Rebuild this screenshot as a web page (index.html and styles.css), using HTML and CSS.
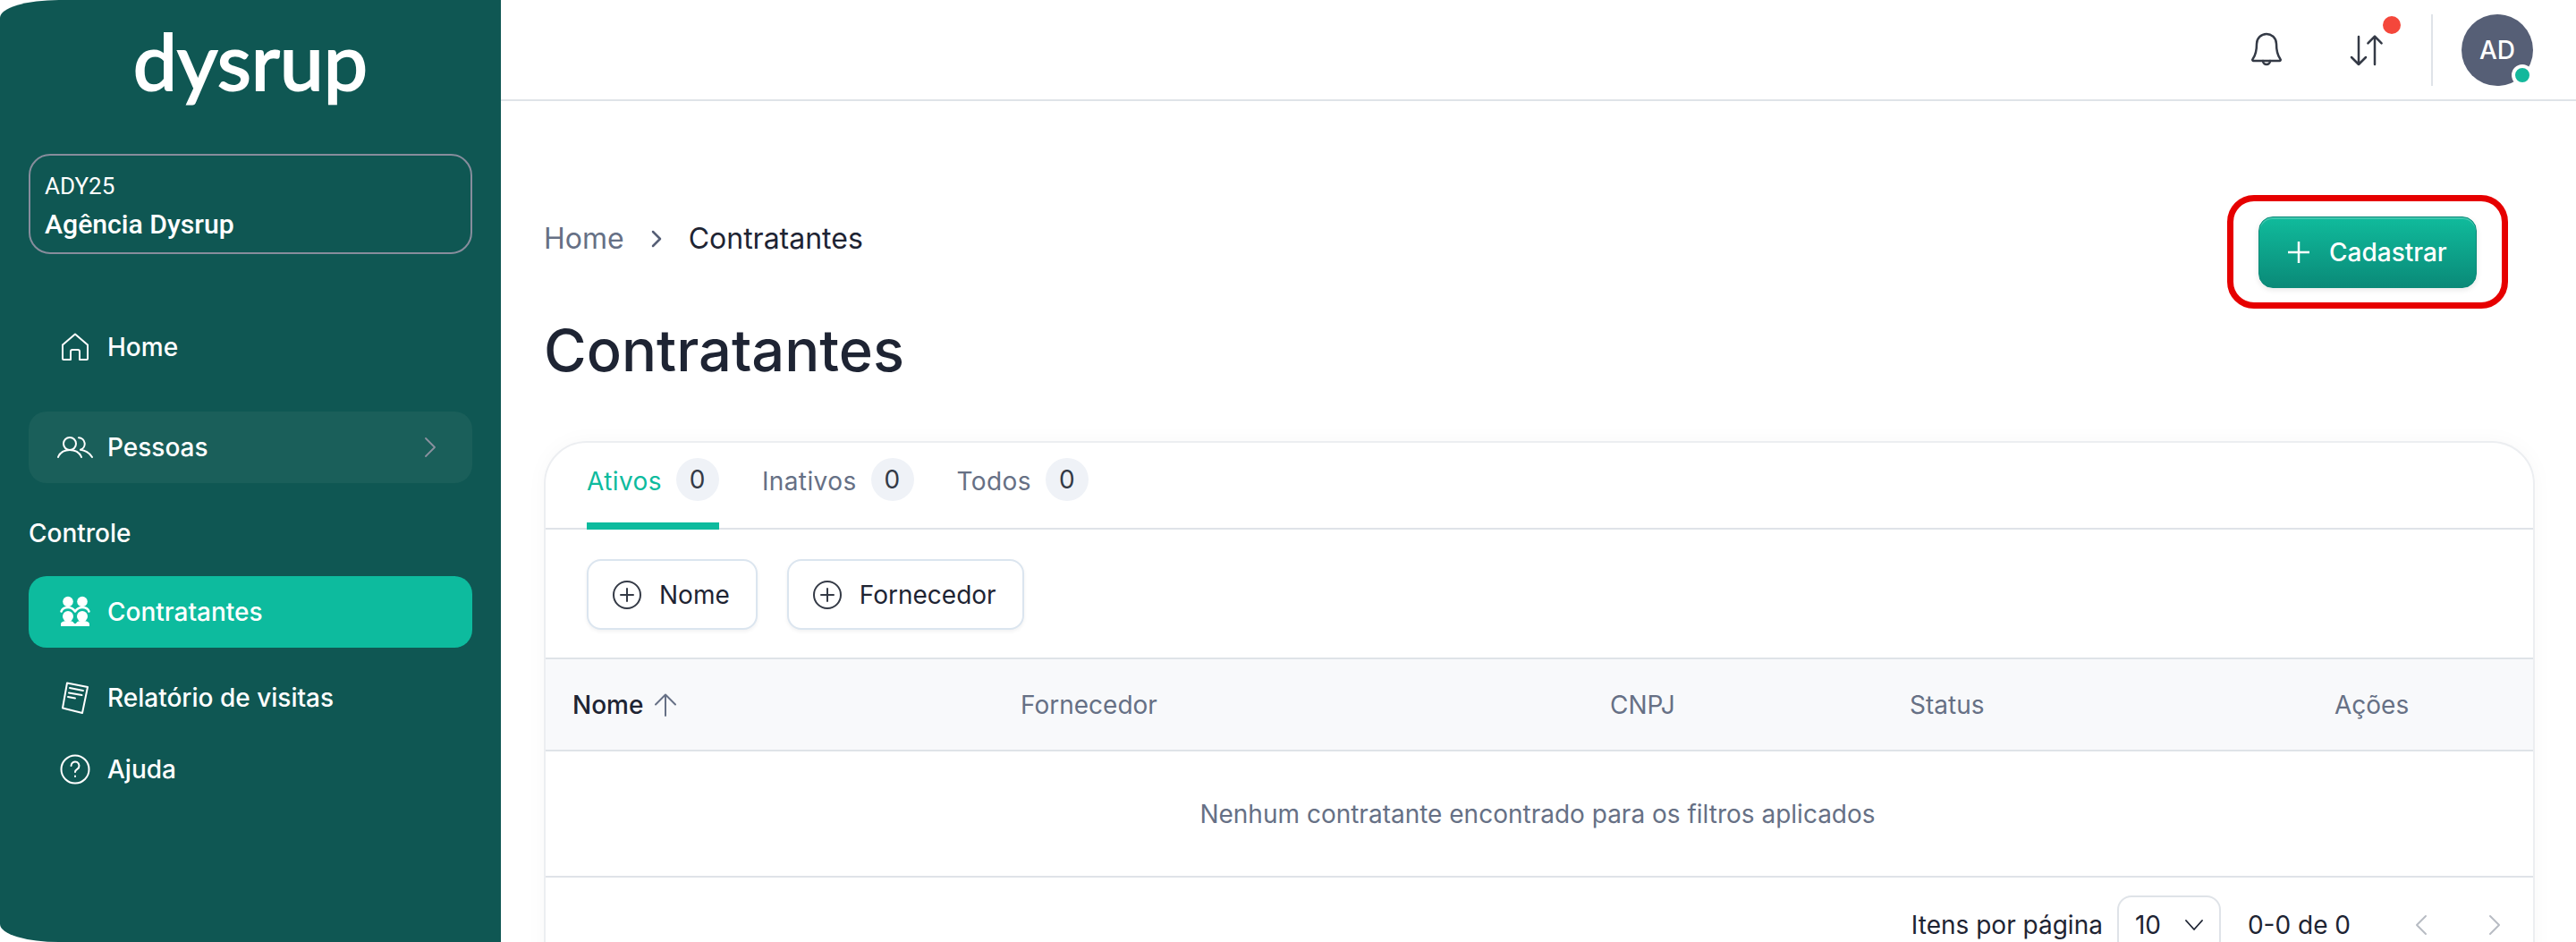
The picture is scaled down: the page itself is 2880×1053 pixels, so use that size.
FILE: index.html
```html
<!DOCTYPE html>
<html lang="pt-BR">
<head>
    <meta charset="UTF-8">
    <title>Contratantes - Dysrup</title>
    <link rel="stylesheet" href="styles.css">
</head>
<body>
    <aside class="sidebar">
        <div class="logo">dysrup</div>

        <div class="agency">
            <span class="agency-code">ADY25</span>
            <span class="agency-name">Agência Dysrup</span>
        </div>

        <nav class="nav">
            <a class="nav-item nav-home">
                <svg class="nav-icon" viewBox="0 0 36 36"><path d="M4 15.500 18 3.500l14 12V31a1 1 0 0 1-1 1h-8v-9a2 2 0 0 0-2-2h-6a2 2 0 0 0-2 2v9H5a1 1 0 0 1-1-1Z"/></svg>
                Home
            </a>
            <a class="nav-item nav-open">
                <svg class="nav-icon nav-icon-wide" viewBox="0 0 40 24"><circle cx="14" cy="8" r="7"/><path d="M1 23c2-5 7-8 13-8s11 3 13 8"/><path d="M24 1.200a7 7 0 0 1 2 13.600c6 .7 10 3.700 13 8.200"/></svg>
                Pessoas
                <svg class="nav-chevron" viewBox="0 0 12 22"><path d="m1 1 10 10L1 21"/></svg>
            </a>
            <div class="nav-title">Controle</div>
            <a class="nav-item nav-active">
                <svg class="nav-icon nav-icon-solid" viewBox="0 0 36 36"><circle cx="10" cy="6.500" r="5.800"/><circle cx="26" cy="6.500" r="5.800"/><path class="shoulders" d="M2.500 17.500c1-3 3.500-4.500 7.500-4.500s6 1.500 8 4.500c2-3 4-4.500 8-4.500s6.500 1.500 7.500 4.500"/><circle cx="10" cy="23" r="6"/><circle cx="26" cy="23" r="6"/><path d="M2 34v-2c0-3 3-4 8-4s6 1 7 3h2c1-2 2-3 7-3s8 1 8 4v2Z"/></svg>
                Contratantes
            </a>
            <a class="nav-item nav-report">
                <svg class="nav-icon" viewBox="0 0 36 36"><path d="M9 1.500 32 6l-6 29-22-5.500Z"/><path d="M12 7l15 3M11 12.500l14.500 2.500M10 17l8 1.500"/></svg>
                Relatório de visitas
            </a>
            <a class="nav-item nav-help">
                <svg class="nav-icon" viewBox="0 0 36 36"><circle cx="18" cy="18" r="15.500"/><path d="M13.500 14a4.500 4.500 0 1 1 7 3.700c-1.500 1-2.500 1.800-2.500 3.300"/><path d="M18 25.500v.5"/></svg>
                Ajuda
            </a>
        </nav>
    </aside>

    <div class="main">
        <header class="topbar">
            <svg class="top-icon" viewBox="0 0 24 24"><path d="M12 3a5.500 5.500 0 0 0-5.500 5.500c0 4-.7 6.500-2.200 8.500a.6.6 0 0 0 .5 1h14.400a.6.6 0 0 0 .5-1c-1.500-2-2.200-4.500-2.200-8.500A5.500 5.500 0 0 0 12 3Z"/><path d="M10 18a2 2 0 0 0 4 0"/></svg>
            <div class="transfer">
                <svg class="top-icon" viewBox="0 0 24 24"><path d="M7.500 4.500v15.500M3.500 16l4 4 4-4M16.500 20V4.500M12.700 8.200l3.800-3.900 3.800 3.900"/></svg>
                <span class="red-dot"></span>
            </div>
            <span class="top-divider"></span>
            <div class="avatar">AD<span class="online"></span></div>
        </header>

        <div class="page-head">
            <div>
                <div class="breadcrumb">
                    <span class="crumb-link">Home</span>
                    <svg class="crumb-sep" viewBox="0 0 12 20"><path d="m2 2 8 8-8 8"/></svg>
                    <span>Contratantes</span>
                </div>
                <h1>Contratantes</h1>
            </div>
            <div class="highlight">
                <button class="btn-primary">
                    <svg class="plus" viewBox="0 0 24 24"><path d="M12 0v24M0 12h24"/></svg>
                    Cadastrar
                </button>
            </div>
        </div>

        <section class="card">
            <div class="tabs">
                <div class="tab tab-active">Ativos <span class="count">0</span></div>
                <div class="tab">Inativos <span class="count">0</span></div>
                <div class="tab">Todos <span class="count">0</span></div>
            </div>

            <div class="filters">
                <button class="filter">
                    <svg class="filter-icon" viewBox="0 0 32 32"><circle cx="16" cy="16" r="15"/><path d="M16 9v14M9 16h14"/></svg>
                    Nome
                </button>
                <button class="filter">
                    <svg class="filter-icon" viewBox="0 0 32 32"><circle cx="16" cy="16" r="15"/><path d="M16 9v14M9 16h14"/></svg>
                    Fornecedor
                </button>
            </div>

            <div class="table-head">
                <div class="sorted">Nome <svg class="sort-icon" viewBox="0 0 26 26"><path d="M13 25V1.500M2 12.500l11-11 11 11"/></svg></div>
                <div>Fornecedor</div>
                <div>CNPJ</div>
                <div>Status</div>
                <div>Ações</div>
            </div>

            <div class="empty">Nenhum contratante encontrado para os filtros aplicados</div>

            <div class="table-foot">
                <span>Itens por página</span>
                <div class="page-size">
                    10
                    <svg class="select-chevron" viewBox="0 0 20 12"><path d="m1 1 9 10 9-10"/></svg>
                </div>
                <span class="range">0-0 de 0</span>
                <svg class="pager" viewBox="0 0 14 24"><path d="M12 2 2 12l10 10"/></svg>
                <svg class="pager" viewBox="0 0 14 24"><path d="m2 2 10 10L2 22"/></svg>
            </div>
        </section>
    </div>
</body>
</html>
```

FILE: styles.css
```css
* {
    box-sizing: border-box;
}
body {
    display: flex;
    height: 1053px;
    margin: 0;
    overflow: hidden;
    background: white;
    color: #1e2433;
    font-family: Inter, "Liberation Sans", sans-serif;
    font-size: 28px;
}
svg {
    flex: none;
    fill: none;
    stroke: currentColor;
    stroke-linecap: round;
    stroke-linejoin: round;
}

/* sidebar */
.sidebar {
    flex: none;
    width: 560px;
    height: 1053px;
    padding: 0 32px;
    background: #0f5753;
    border-radius: 66px 0 0 66px / 20px 0 0 20px;
    color: white;
}
.logo {
    height: 172px;
    padding-top: 17px;
    color: white;
    font-family: Lato, sans-serif;
    font-size: 88px;
    line-height: 100px;
    text-align: center;
    -webkit-text-stroke: 2px white;
}
.agency {
    display: flex;
    flex-direction: column;
    justify-content: center;
    height: 112px;
    padding-left: 16px;
    border: 2px solid #878d9c;
    border-radius: 24px;
    font-family: Roboto, sans-serif;
}
.agency-code {
    margin-top: 3px;
    font-size: 26px;
    line-height: 34px;
}
.agency-name {
    margin-top: 8px;
    font-size: 30.2px;
    font-weight: 500;
    line-height: 36px;
}
.nav-item {
    display: flex;
    align-items: center;
    height: 80px;
    padding-left: 34px;
    border-radius: 20px;
    font-weight: 500;
}
.nav-icon {
    width: 36px;
    height: 36px;
    margin-right: 18px;
    stroke-width: 2;
}
.nav-icon-wide {
    width: 40px;
    height: 24px;
    margin-left: -2px;
    margin-right: 16px;
}
.nav-icon-solid {
    fill: white;
    stroke: none;
}
.shoulders {
    fill: none;
    stroke: white;
    stroke-width: 2.5;
}
.nav-home {
    margin-top: 64px;
}
.nav-open {
    margin-top: 32px;
    background: #1a5f5a;
}
.nav-chevron {
    width: 12px;
    height: 22px;
    margin-left: auto;
    margin-right: 41px;
    color: #8b919f;
    stroke-width: 1.8;
}
.nav-title {
    margin-top: 36px;
    font-weight: 500;
    line-height: 40px;
}
.nav-active {
    margin-top: 28px;
    background: #0dbb9e;
}
.nav-report {
    margin-top: 16px;
}
.nav-help {
    margin-top: 0;
}

/* top bar */
.main {
    flex: 1;
    min-width: 0;
    padding: 0 46px 0 48px;
}
.topbar {
    display: flex;
    align-items: center;
    justify-content: flex-end;
    height: 113px;
    margin: 0 -46px 0 -48px;
    padding-right: 48px;
    border-bottom: 2px solid #dfe3e8;
}
.top-icon {
    display: block;
    width: 48px;
    height: 48px;
    color: #343a46;
    stroke-width: 1.25;
}
.transfer {
    position: relative;
    margin-left: 64px;
}
.red-dot {
    position: absolute;
    top: -14px;
    right: -14px;
    width: 20px;
    height: 20px;
    border-radius: 50%;
    background: #f4473b;
}
.top-divider {
    width: 2px;
    height: 80px;
    margin: 0 32px 0 48px;
    background: #dfe3e8;
}
.avatar {
    position: relative;
    display: flex;
    align-items: center;
    justify-content: center;
    width: 80px;
    height: 80px;
    border-radius: 50%;
    background: #565f76;
    color: white;
    font-weight: 500;
}
.online {
    position: absolute;
    right: 0;
    bottom: 0;
    width: 24px;
    height: 24px;
    border: 4px solid white;
    border-radius: 50%;
    background: #14b89c;
}

/* page heading */
.page-head {
    display: flex;
    justify-content: space-between;
    align-items: flex-start;
    margin-top: 105px;
    padding-right: 30px;
}
.breadcrumb {
    display: flex;
    align-items: center;
    margin-top: 29px;
    font-size: 32px;
    line-height: 40px;
}
.crumb-link {
    color: #667085;
}
.crumb-sep {
    width: 12px;
    height: 20px;
    margin: 0 30px;
    color: #565f76;
    stroke-width: 2.5;
}
h1 {
    margin: 67px 0 0;
    font-size: 65px;
    font-weight: 500;
    line-height: 76px;
}
.highlight {
    padding: 17px 28px 16px;
    border: 7px solid #e60000;
    border-radius: 30px;
}
.btn-primary {
    display: flex;
    align-items: center;
    gap: 22px;
    width: 244px;
    height: 80px;
    padding: 0 32px;
    border: 1px solid #0a8a78;
    border-radius: 16px;
    background: linear-gradient(#10bb9c, #0a8a78);
    box-shadow: inset 0 2px 0 rgba(255,255,255,0.2), 0 2px 6px rgba(0,0,0,0.1);
    color: white;
    font-family: inherit;
    font-size: 28px;
    font-weight: 500;
}
.plus {
    width: 24px;
    height: 24px;
    stroke-width: 2.5;
    stroke-linecap: butt;
}

/* table card */
.card {
    margin-top: 63px;
    border: 2px solid #eceef1;
    border-radius: 48px 48px 0 0;
    box-shadow: 0 0 24px rgba(0,0,0,0.03);
}
.tabs {
    display: flex;
    gap: 48px;
    height: 97px;
    padding: 17px 0 0 46px;
    border-bottom: 2px solid #dfe3e8;
}
.tab {
    display: flex;
    gap: 16px;
    align-items: flex-start;
    height: 78px;
    color: #667085;
    letter-spacing: 0.4px;
    line-height: 52px;
}
.tab-active {
    color: #0dbb9e;
    border-bottom: 8px solid #0dbb9e;
    border-radius: 8px 8px 0 0;
    height: 80px;
    margin-bottom: -2px;
}
.count {
    display: flex;
    align-items: center;
    justify-content: center;
    width: 48px;
    height: 48px;
    border-radius: 24px;
    background: #eff2f7;
    color: #343a46;
    font-size: 28px;
    line-height: 48px;
}
.filters {
    display: flex;
    gap: 33px;
    padding: 33px 0 31px 46px;
}
.filter {
    display: flex;
    align-items: center;
    gap: 20px;
    height: 79px;
    padding: 0 29px 0 27px;
    border: 2px solid #dbe5ef;
    border-radius: 16px;
    background: white;
    box-shadow: 0 2px 4px rgba(16,24,40,0.06);
    color: #1e2433;
    font-family: inherit;
    font-size: 28px;
}
.filter-icon {
    width: 32px;
    height: 32px;
    color: #343a46;
    stroke-width: 2;
}
.table-head {
    display: grid;
    grid-template-columns: 501px 659px 335px 475px 1fr;
    align-items: center;
    height: 105px;
    padding-left: 30px;
    border-top: 2px solid #dfe3e8;
    border-bottom: 2px solid #dfe3e8;
    background: #f8f9fb;
    color: #667085;
}
.sorted {
    display: flex;
    align-items: center;
    gap: 12px;
    color: #1e2433;
    font-weight: 500;
}
.sort-icon {
    width: 26px;
    height: 26px;
    color: #667085;
    stroke-width: 2;
}
.empty {
    height: 141px;
    padding-right: 4px;
    border-bottom: 2px solid #dfe3e8;
    color: #667085;
    line-height: 140px;
    text-align: center;
}
.table-foot {
    display: flex;
    align-items: center;
    justify-content: flex-end;
    padding: 20px 36px 20px 0;
}
.page-size {
    display: flex;
    align-items: center;
    justify-content: space-between;
    width: 116px;
    height: 66px;
    margin: 0 30px 0 16px;
    padding: 0 18px;
    border: 2px solid #dfe3e8;
    border-radius: 16px;
}
.select-chevron {
    width: 20px;
    height: 12px;
    stroke-width: 1.8;
}
.range {
    margin-right: 72px;
}
.pager {
    width: 14px;
    height: 24px;
    margin-left: 68px;
    color: #b8bcc4;
    stroke-width: 2;
}
.range + .pager {
    margin-left: 0;
}
```
